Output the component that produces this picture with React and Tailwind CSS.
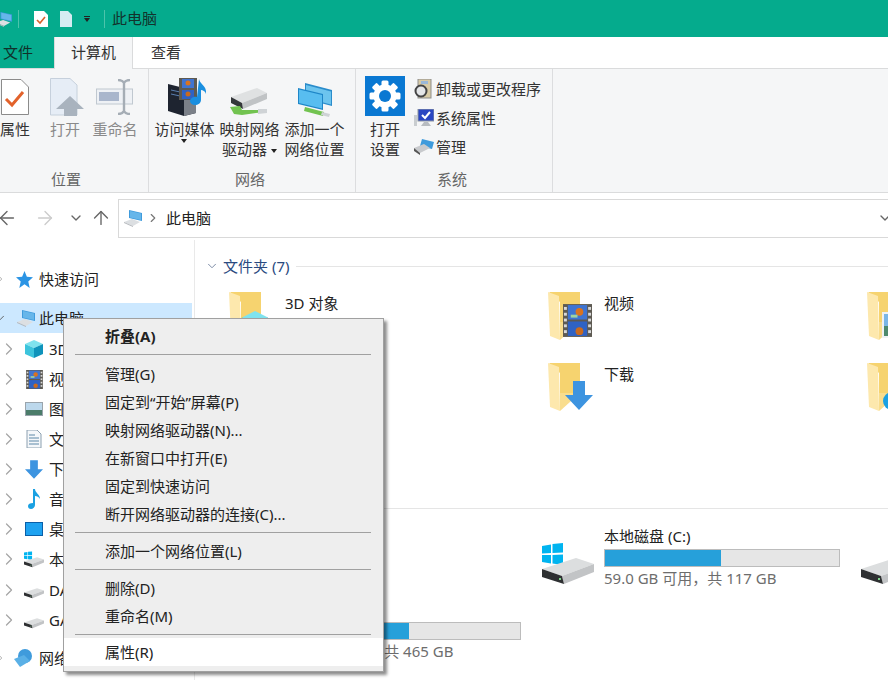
import { ChevronRight, ChevronDown, ArrowLeft, ArrowRight, ArrowUp } from 'lucide-react';

function PcIcon({ className }) {
  return (
    <svg viewBox="0 0 20 18" className={className}>
      <polygon points="6,1 19,4 19,12 6,9" fill="#3f9bdc" />
      <polygon points="7,2 18,4.5 18,11 7,8.5" fill="#66b6ea" />
      <polygon points="1,13 9,10 17,13 10,17" fill="#dcdfe2" />
      <polygon points="1,13 10,17 10,18 1,14" fill="#b4b8bc" />
    </svg>
  );
}

function Drive({ className, win }) {
  return (
    <svg viewBox="0 0 52 42" className={className}>
      {win && (
        <g fill="#00b4f0">
          <polygon points="0,3 9,1.5 9,10 0,10.5" />
          <polygon points="10.5,1 21,0 21,9.5 10.5,10" />
          <polygon points="0,12 9,12 9,20.5 0,19" />
          <polygon points="10.5,12 21,11.5 21,22 10.5,20.5" />
        </g>
      )}
      <polygon points="0,26 34,15 52,21 20,33" fill="#dcdedf" />
      <polygon points="20,33 52,21 52,29 22,41" fill="#c2c4c6" />
      <polygon points="0,26 20,33 22,41 0,34" fill="#2e3032" />
      <rect x="17" y="35" width="2" height="2" fill="#7fd18a" />
    </svg>
  );
}

function Folder({ children }) {
  return (
    <div className="relative w-[46px] h-[52px] shrink-0">
      <svg viewBox="0 0 46 52" className="w-[46px] h-[52px]">
        <polygon points="1,2 32,2 32,32 12,32 12,12" fill="#f6d36f" />
        <polygon points="0,2 11,6 12,50 2,46" fill="#fde8ad" />
        <polygon points="12,32 32,32 12,50" fill="#f9dd8d" />
      </svg>
      {children}
    </div>
  );
}

function FilmStrip({ className }) {
  return (
    <svg viewBox="0 0 30 34" className={className}>
      <rect width="30" height="34" fill="#5d5a52" />
      <rect x="5" y="1" width="20" height="15" fill="#3f74d1" />
      <rect x="5" y="18" width="20" height="15" fill="#2f62c4" />
      <circle cx="17" cy="8" r="4" fill="#d9731f" />
      <circle cx="17" cy="28" r="4" fill="#c96a1e" />
      <rect x="8" y="11" width="7" height="3" fill="#9fd3a0" />
      <g fill="#d8d8d8">
        <rect x="1" y="3" width="3" height="3" /><rect x="1" y="9" width="3" height="3" />
        <rect x="1" y="15" width="3" height="3" /><rect x="1" y="21" width="3" height="3" />
        <rect x="1" y="27" width="3" height="3" /><rect x="26" y="3" width="3" height="3" />
        <rect x="26" y="9" width="3" height="3" /><rect x="26" y="15" width="3" height="3" />
        <rect x="26" y="21" width="3" height="3" /><rect x="26" y="27" width="3" height="3" />
      </g>
    </svg>
  );
}

function BlueArrow({ className }) {
  return (
    <svg viewBox="0 0 28 29" className={className}>
      <polygon points="8,0 20,0 20,14 28,14 14,29 0,14 8,14" fill="#3d94e0" />
    </svg>
  );
}

function NetLocation({ className }) {
  return (
    <svg viewBox="0 0 36 34" className={className}>
      <polygon points="8,0 35,7 35,23 8,16" fill="#2a8ccb" />
      <polygon points="9,2 34,8.5 34,21.5 9,15" fill="#6cc4ee" />
      <polygon points="1,5 26,11 26,27 1,21" fill="#1e86c8" />
      <polygon points="2,6.5 25,12 25,25.5 2,20" fill="#58bdf0" />
      <polygon points="8,24 27,29 26,33 7,28" fill="#72c350" />
      <polygon points="25,29 33,31 32,34 24,32" fill="#cfd3d6" />
    </svg>
  );
}

function NetDrive({ className }) {
  return (
    <svg viewBox="0 0 40 30" className={className}>
      <polygon points="3,10 29,1 39,6 14,16" fill="#dfe1e2" />
      <polygon points="14,16 39,6 39,12 15,22" fill="#c0c3c5" />
      <polygon points="3,10 14,16 15,22 3,16" fill="#34373a" />
      <polygon points="2,20 12,19 14,23 36,23 36,25 14,28 6,27" fill="#72c350" />
      <polygon points="30,22 39,22 39,26 30,27" fill="#cfd3d6" />
    </svg>
  );
}

function MediaIcon({ className }) {
  return (
    <svg viewBox="0 0 42 38" className={className}>
      <polygon points="0,6 16,10 28,8 28,35 16,38 0,33" fill="#1e2430" />
      <polygon points="16,10 28,8 28,35 16,38" fill="#7b8088" />
      <path d="M3 12l9 2M3 16l9 2" stroke="#5a7fb0" />
      <rect x="11" y="0" width="18" height="22" fill="#5d5a52" />
      <rect x="14" y="1" width="12" height="9" fill="#3f74d1" />
      <rect x="14" y="12" width="12" height="9" fill="#2f62c4" />
      <circle cx="20" cy="5" r="2.5" fill="#d9731f" />
      <circle cx="20" cy="16" r="2.5" fill="#c96a1e" />
      <path d="M31 1c1 6 8 6 7 15-1-3-3-4-5-4v10c0 3-3 5-6 5s-5-2-5-4 3-5 7-4z" fill="#1a8fe0" />
    </svg>
  );
}

function Gear() {
  const teeth = [0, 45, 90, 135];
  return (
    <svg viewBox="0 0 40 40" className="w-[40px] h-[40px]">
      <rect width="40" height="40" fill="#0a78d2" />
      <circle cx="20" cy="20" r="8.5" fill="none" stroke="#fff" strokeWidth="6" />
      {teeth.map(a => (
        <rect key={a} x="16.5" y="4.5" width="7" height="31" rx="1.5" fill="#fff" transform={`rotate(${a} 20 20)`} />
      ))}
      <circle cx="20" cy="20" r="6" fill="#0a78d2" />
    </svg>
  );
}

function Caret({ className }) {
  return <span className={`inline-block w-0 h-0 border-x-[3.5px] border-x-transparent border-t-[4px] border-t-[#222] ${className || ''}`} />;
}

function RibbonBtn({ width, icon, lines, dim, caret, under }) {
  return (
    <div className={`relative flex flex-col items-center shrink-0 ${width}`}>
      <div className="h-[44px] pb-[3px] flex items-end justify-center">{icon}</div>
      <div className={`text-center whitespace-nowrap ${dim ? 'text-[#8a8a8a]' : 'text-[#333]'}`}>
        {lines.map((l, i) => <div key={i}>{l}{caret && i === lines.length - 1 && <Caret className="ml-[4px] mb-[2px]" />}</div>)}
        {under && <div className="flex justify-center h-[5px]"><Caret /></div>}
      </div>
    </div>
  );
}

function Group({ width, label, children, className, labelCls }) {
  return (
    <div className={`flex flex-col shrink-0 border-r border-[#dcdddf] ${width} ${className || ''}`}>
      <div className="flex flex-1 pt-[6px]">{children}</div>
      <div className={`h-[21px] mb-[2px] text-center text-[#666] ${labelCls || ''}`}>{label}</div>
    </div>
  );
}

const navRows = [
  { name: '3D 对象', cls: 'mt-px', icon: <svg viewBox="0 0 20 20" className="w-[20px] h-[20px]"><polygon points="10,1 19,5 10,9 1,5" fill="#7fe3ee" /><polygon points="1,5 10,9 10,19 1,15" fill="#3cc4dc" /><polygon points="19,5 10,9 10,19 19,15" fill="#0f93bb" /></svg> },
  { name: '视频', icon: <FilmStrip className="w-[17px] h-[19px]" /> },
  { name: '图片', icon: <svg viewBox="0 0 18 14" className="w-[18px] h-[14px]"><rect width="18" height="14" fill="#9aa4ac" /><rect x="1" y="1" width="16" height="12" fill="#bcd8ec" /><rect x="1" y="8" width="16" height="5" fill="#4b7c6a" /></svg> },
  { name: '文档', icon: <svg viewBox="0 0 16 18" className="w-[16px] h-[18px]"><polygon points="1,0 11,0 15,4 15,18 1,18" fill="#f4f7fa" stroke="#8ca0b0" /><path d="M3 5h6M3 8h10M3 11h10M3 14h10" stroke="#5d88a8" /></svg> },
  { name: '下载', icon: <BlueArrow className="w-[18px] h-[19px]" /> },
  { name: '音乐', icon: <svg viewBox="0 0 14 20" className="w-[14px] h-[20px]"><path d="M6 0h2c0 4 5 5 5 10-1-2-3-3-5-3v9c0 2-2 4-4 4s-3-1-3-3 2-3 5-3z" fill="#1ba1e2" /></svg> },
  { name: '桌面', icon: <svg viewBox="0 0 18 14" className="w-[18px] h-[14px]"><rect width="18" height="14" fill="#0a5fa8" /><rect x="1" y="1" width="16" height="12" fill="#1ea2f0" /></svg> },
  { name: '本地磁盘 (C:)', icon: <Drive win className="w-[20px] h-[17px]" /> },
  { name: 'DATA (D:)', icon: <Drive className="w-[20px] h-[17px]" />, cls: 'mt-px' },
  { name: 'GAME (G:)', icon: <Drive className="w-[20px] h-[17px]" /> },
];

const folders = [
  { name: '3D 对象', badge: <svg viewBox="0 0 26 26" className="absolute left-[12px] top-[20px] w-[28px] h-[28px]"><polygon points="13,1 25,7 13,13 1,7" fill="#7fe3ee" /><polygon points="1,7 13,13 13,25 1,19" fill="#3cc4dc" /><polygon points="25,7 13,13 13,25 25,19" fill="#0f93bb" /></svg> },
  { name: '视频', badge: <FilmStrip className="absolute left-[15px] top-[14px] w-[29px] h-[33px]" /> },
  { name: '图片', badge: <svg viewBox="0 0 34 26" className="absolute left-[15px] top-[22px] w-[34px] h-[26px]"><rect width="34" height="26" fill="#eef2f5" /><rect x="2" y="2" width="30" height="14" fill="#7ab6e6" /><rect x="2" y="14" width="30" height="10" fill="#4e8a6d" /></svg> },
  { name: '文档' },
  { name: '下载', badge: <BlueArrow className="absolute left-[17px] top-[20px] w-[28px] h-[29px]" /> },
  { name: '音乐', badge: <svg viewBox="0 0 20 20" className="absolute left-[15px] top-[30px] w-[20px] h-[20px]"><circle cx="10" cy="10" r="9" fill="#1ba1e2" /></svg> },
  { name: '桌面' },
];

function Menu() {
  const Item = ({ children, bold, hover }) => (
    <div className={`h-[28px] pl-[41px] leading-[28px] text-[#222] ${bold ? 'font-bold' : ''} ${hover ? 'bg-white' : ''}`}>{children}</div>
  );
  const Sep = ({ cls }) => <div className={`h-px bg-[#a0a0a0] ml-[11px] mr-[12px] my-[4px] ${cls || ''}`} />;
  return (
    <div className="absolute left-[63px] top-[318px] w-[321px] h-[354px] bg-[#eeeeee] border border-[#a0a0a0] pt-[3px] shadow-[3px_3px_3px_rgba(0,0,0,0.45)]">
      <Item bold>折叠(A)</Item>
      <Sep cls="mb-[5px]" />
      <Item>管理(G)</Item>
      <Item>固定到“开始”屏幕(P)</Item>
      <Item>映射网络驱动器(N)...</Item>
      <Item>在新窗口中打开(E)</Item>
      <Item>固定到快速访问</Item>
      <Item>断开网络驱动器的连接(C)...</Item>
      <Sep />
      <Item>添加一个网络位置(L)</Item>
      <Sep />
      <Item>删除(D)</Item>
      <Item>重命名(M)</Item>
      <Sep cls="mb-[3px]" />
      <Item hover>属性(R)</Item>
    </div>
  );
}

export default function App() {
  return (
    <div className="relative w-[888px] h-[680px] overflow-hidden bg-white text-[15px] leading-[20px] text-[#222] font-['Noto_Sans','Noto_Sans_CJK_SC',sans-serif]">
      {/* title bar */}
      <div className="h-[37px] bg-[#05ab8d] flex items-center">
        <PcIcon className="w-[18px] h-[16px] ml-[-5px]" />
        <div className="w-px h-[18px] bg-[#4cc4ab] ml-[5px]" />
        <svg viewBox="0 0 14 16" className="w-[14px] h-[16px] ml-[15px]"><polygon points="0,0 10,0 14,4 14,16 0,16" fill="#fff" /><path d="M3 9l3 3 5-6" stroke="#d9622b" strokeWidth="1.6" fill="none" /></svg>
        <svg viewBox="0 0 12 16" className="w-[12px] h-[16px] ml-[12px]"><polygon points="0,0 8,0 12,4 12,16 0,16" fill="#d5ecf2" /></svg>
        <div className="ml-[12px] flex flex-col items-center gap-[1px]">
          <div className="w-[6px] h-px bg-[#222]" />
          <Caret />
        </div>
        <div className="w-px h-[18px] bg-[#4cc4ab] ml-[14px]" />
        <span className="ml-[7px] mb-[1px] text-[#12332c]">此电脑</span>
      </div>

      {/* tabs */}
      <div className="h-[32px] flex border-b border-[#dadbdc]">
        <div className="w-[54px] bg-[#05ab8d] pl-[3px] leading-[30px] text-[#10302a]">文件</div>
        <div className="w-[79px] h-[32px] bg-[#f5f6f7] border-x border-[#dadbdc] text-center leading-[30px] text-[#333]">计算机</div>
        <div className="pl-[18px] leading-[30px] text-[#333]">查看</div>
      </div>

      {/* ribbon */}
      <div className="h-[124px] bg-[#f5f6f7] border-b border-[#dadbdc] flex overflow-hidden">
        <Group width="w-[165px]" label="位置" className="ml-[-16px]">
          <div className="flex pl-[6px]">
            <RibbonBtn width="w-[50px]" lines={['属性']} icon={
              <svg viewBox="0 0 28 36" className="w-[28px] h-[36px] mb-[1px]"><polygon points="0.5,0.5 20,0.5 27.5,8 27.5,35.5 0.5,35.5" fill="#fff" stroke="#8b8b8b" /><path d="M5 20l6 6 11-13" stroke="#e2622b" strokeWidth="3" fill="none" /></svg>
            } />
            <RibbonBtn width="w-[50px]" dim lines={['打开']} icon={
              <svg viewBox="0 0 34 38" className="w-[34px] h-[38px] ml-[4px]"><polygon points="0.5,0.5 20,0.5 27,7 27,37 0.5,37" fill="#e6edf6" stroke="#c6d0dc" /><polygon points="20,18 34,31 27,31 27,38 14,38 14,31 6,31" fill="#a9b3be" /></svg>
            } />
            <RibbonBtn width="w-[50px]" dim lines={['重命名']} icon={
              <svg viewBox="0 0 38 36" className="w-[38px] h-[36px] mb-[1px]"><rect x="0.5" y="10" width="36" height="15" fill="#eef1f5" stroke="#c0c8d0" /><rect x="3" y="13" width="20" height="9" fill="#a9b6cc" /><path d="M22 1c3 0 5 1 6 3 1-2 3-3 6-3M28 4v28M22 35c3 0 5-1 6-3 1 2 3 3 6 3" stroke="#a5adb5" strokeWidth="2.4" fill="none" /></svg>
            } />
          </div>
        </Group>
        <Group width="w-[207px]" label="网络" labelCls="pr-[4px]">
          <div className="flex pl-[3px]">
            <RibbonBtn width="w-[65px]" under lines={['访问媒体']} icon={<MediaIcon className="w-[42px] h-[38px] ml-[8px]" />} />
            <RibbonBtn width="w-[65px]" caret lines={['映射网络', '驱动器']} icon={<NetDrive className="w-[40px] h-[30px] ml-[-4px] mb-[-1px]" />} />
            <RibbonBtn width="w-[65px]" lines={['添加一个', '网络位置']} icon={<NetLocation className="w-[36px] h-[34px] mb-[-1px]" />} />
          </div>
        </Group>
        <div className="flex flex-col w-[197px] shrink-0 border-r border-[#dcdddf]">
          <div className="flex flex-1 pt-[7px] pl-[9px]">
            <div className="flex flex-col items-center w-[40px]">
              <Gear />
              <div className="text-center text-[#333] mt-[3px] whitespace-nowrap"><div>打开</div><div>设置</div></div>
            </div>
            <div className="ml-[9px] flex flex-col gap-[9px] pt-[3px] text-[#333] whitespace-nowrap">
              <div className="flex items-center gap-[4px]">
                <svg viewBox="0 0 18 20" className="w-[18px] h-[20px]"><rect x="4" y="0" width="13" height="19" fill="#d8cba6" stroke="#8d8d8d" /><rect x="7" y="2" width="7" height="3" fill="#9ab8d8" /><circle cx="7" cy="12" r="5.5" fill="#e4e6e8" stroke="#444" strokeWidth="2" /></svg>
                卸载或更改程序
              </div>
              <div className="flex items-center gap-[2px]">
                <svg viewBox="0 0 20 18" className="w-[20px] h-[18px]"><rect x="0" y="6" width="3" height="11" fill="#c9cdd0" /><rect x="4" y="0" width="16" height="12" fill="#2a46c2" stroke="#8e96a0" /><path d="M8 6l3 3 5-6" stroke="#fff" strokeWidth="2" fill="none" /><polygon points="7,17 17,17 14,13 10,13" fill="#b8bcc0" /></svg>
                系统属性
              </div>
              <div className="flex items-center gap-[2px]">
                <svg viewBox="0 0 20 16" className="w-[20px] h-[16px]"><polygon points="8,0 20,3 18,10 6,7" fill="#3f9bdc" /><polygon points="0,9 10,5 16,9 6,14" fill="#c8cacd" /><polygon points="0,9 6,14 6,16 0,12" fill="#555" /></svg>
                管理
              </div>
            </div>
          </div>
          <div className="h-[21px] mb-[2px] pr-[4px] text-center text-[#666]">系统</div>
        </div>
      </div>

      {/* nav bar */}
      <div className="h-[40px] mt-[5px] flex items-center">
        <ArrowLeft className="w-[22px] h-[22px] ml-[-4px] shrink-0 text-[#666]" strokeWidth={1.5} />
        <ArrowRight className="w-[22px] h-[22px] ml-[16px] shrink-0 text-[#ccc]" strokeWidth={1.5} />
        <ChevronDown className="w-[16px] h-[16px] ml-[12px] shrink-0 text-[#666]" />
        <ArrowUp className="w-[22px] h-[22px] ml-[6px] shrink-0 text-[#666]" strokeWidth={1.5} />
        <div className="ml-[6px] w-[790px] shrink-0 h-[39px] border border-[#d9d9d9] flex items-center">
          <PcIcon className="w-[20px] h-[18px] ml-[4px]" />
          <ChevronRight className="w-[14px] h-[14px] ml-[3px] text-[#777]" />
          <span className="ml-[6px] mb-[1px] text-[#222]">此电脑</span>
          <ChevronDown className="w-[16px] h-[16px] ml-auto mr-[14px] text-[#666]" />
        </div>
      </div>

      {/* body */}
      <div className="flex h-[442px]">
        <div className="w-[195px] shrink-0 border-r border-[#e9e9e9] pt-[24px] mt-[2px]">
          <div className="h-[30px] flex items-center">
            <ChevronRight className="w-[14px] h-[14px] ml-[-7px] mr-[9px] text-[#a6a6a6] shrink-0" strokeWidth={1.5} />
            <svg viewBox="0 0 18 18" className="w-[17px] h-[17px]"><polygon points="9,0 11.5,6 18,6.5 13,11 14.5,18 9,14 3.5,18 5,11 0,6.5 6.5,6" fill="#2b94e4" /></svg>
            <span className="ml-[6px] mb-[1px]">快速访问</span>
          </div>
          <div className="h-[30px] mt-[9px] w-[192px] bg-[#cce8ff] flex items-center">
            <ChevronDown className="w-[14px] h-[14px] ml-[-7px] mr-[9px] text-[#555] shrink-0" strokeWidth={1.5} />
            <PcIcon className="w-[20px] h-[18px]" />
            <span className="ml-[3px]">此电脑</span>
          </div>
          {navRows.map(r => (
            <div key={r.name} className={`h-[30px] flex items-center ${r.cls || ''}`}>
              <ChevronRight className="w-[20px] h-[20px] ml-[-1px] text-[#a6a6a6] shrink-0" strokeWidth={1.5} />
              <div className="w-[20px] ml-[5px] flex justify-center shrink-0">{r.icon}</div>
              <span className="ml-[5px] whitespace-nowrap">{r.name}</span>
            </div>
          ))}
          <div className="h-[30px] mt-[8px] flex items-center">
            <ChevronRight className="w-[14px] h-[14px] ml-[-7px] mr-[7px] text-[#a6a6a6] shrink-0" strokeWidth={1.5} />
            <svg viewBox="0 0 20 18" className="w-[20px] h-[18px]"><circle cx="11" cy="7" r="7" fill="#3f9bdc" /><polygon points="0,10 10,6 16,12 6,18" fill="#5ab0e6" /></svg>
            <span className="ml-[5px]">网络</span>
          </div>
        </div>

        <div className="flex-1 min-w-0 mt-[16px]">
          <div className="h-[24px] flex items-center pl-[10px]">
            <ChevronDown className="w-[14px] h-[14px] text-[#6a7c99]" strokeWidth={1.5} />
            <span className="ml-[4px] mb-[1px] text-[#2a4a7f] whitespace-nowrap">文件夹 (7)</span>
            <div className="flex-1 h-px bg-[#e5e5e5] ml-[7px]" />
          </div>
          <div className="grid grid-cols-[319px_319px_319px] auto-rows-[71px] h-[206px] ml-[34px] mt-[12px]">
            {folders.map(f => (
              <div key={f.name} className="flex">
                <Folder>{f.badge}</Folder>
                <span className="ml-[10px] mt-[3px] whitespace-nowrap">{f.name}</span>
              </div>
            ))}
          </div>
          <div className="h-[24px] flex items-center pl-[10px]">
            <ChevronDown className="w-[14px] h-[14px] text-[#6a7c99]" strokeWidth={1.5} />
            <span className="ml-[4px] text-[#2a4a7f] whitespace-nowrap">设备和驱动器 (5)</span>
            <div className="flex-1 h-px bg-[#e5e5e5] ml-[7px]" />
          </div>
          <div className="grid grid-cols-[319px_319px_319px] auto-rows-[73px] ml-[28px] mt-[6px]">
            <div />
            <DriveTile win name="本地磁盘 (C:)" fill="w-[49.6%]" sub="59.0 GB 可用，共 117 GB" />
            <DriveTile name="DATA (D:)" fill="w-[40%]" sub="120 GB 可用，共 200 GB" />
            <DriveTile name="GAME (G:)" fill="w-[52.5%]" sub="221 GB 可用，共 465 GB" />
          </div>
        </div>
      </div>

      <Menu />
    </div>
  );
}

function DriveTile({ win, name, fill, sub }) {
  return (
    <div className="flex">
      <Drive win={win} className="w-[52px] h-[42px] mt-[17px] shrink-0" />
      <div className="ml-[10px] w-[236px] shrink-0">
        <div className="h-[23px] whitespace-nowrap">{name}</div>
        <div className="h-[18px] bg-[#e6e6e6] border border-[#bcbcbc]">
          <div className={`h-full bg-[#26a0da] ${fill}`} />
        </div>
        <div className="h-[22px] leading-[22px] text-[#6d6d6d] whitespace-nowrap">{sub}</div>
      </div>
    </div>
  );
}
